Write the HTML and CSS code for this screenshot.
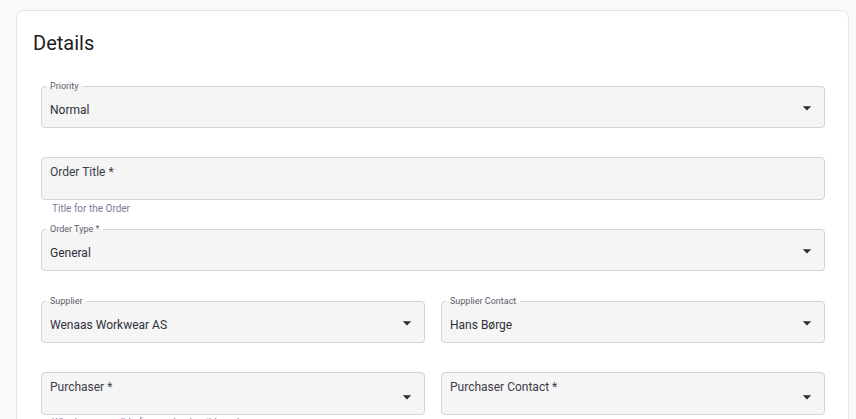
FILE: index.html
```html
<!DOCTYPE html>
<html>
<head>
    <title>Order Details</title>
    <meta name="viewport" content="width=device-width, initial-scale=1.0">
    <link rel="stylesheet" href="styles.css">
</head>
<body>
    <div class="card">
        <h2 class="card-title">Details</h2>

        <div class="form">
            <fieldset class="field field-priority">
                <legend>Priority</legend>
                <div class="value">Normal</div>
                <svg class="arrow" viewBox="0 0 24 24"><path d="M7 10l5 5 5-5z"/></svg>
            </fieldset>

            <div class="field-empty field-title">
                <div class="placeholder">Order Title *</div>
            </div>
            <div class="helper">Title for the Order</div>

            <fieldset class="field field-type">
                <legend>Order Type *</legend>
                <div class="value">General</div>
                <svg class="arrow" viewBox="0 0 24 24"><path d="M7 10l5 5 5-5z"/></svg>
            </fieldset>

            <div class="row row-supplier">
                <fieldset class="field">
                    <legend>Supplier</legend>
                    <div class="value">Wenaas Workwear AS</div>
                    <svg class="arrow" viewBox="0 0 24 24"><path d="M7 10l5 5 5-5z"/></svg>
                </fieldset>
                <fieldset class="field">
                    <legend>Supplier Contact</legend>
                    <div class="value">Hans Børge</div>
                    <svg class="arrow" viewBox="0 0 24 24"><path d="M7 10l5 5 5-5z"/></svg>
                </fieldset>
            </div>

            <div class="row row-purchaser">
                <div>
                    <div class="field-empty select-empty">
                        <div class="placeholder">Purchaser *</div>
                        <svg class="arrow" viewBox="0 0 24 24"><path d="M7 10l5 5 5-5z"/></svg>
                    </div>
                    <div class="helper">Who is responsible for purchasing this order</div>
                </div>
                <div>
                    <div class="field-empty select-empty">
                        <div class="placeholder">Purchaser Contact *</div>
                        <svg class="arrow" viewBox="0 0 24 24"><path d="M7 10l5 5 5-5z"/></svg>
                    </div>
                </div>
            </div>
        </div>
    </div>
</body>
</html>
```

FILE: styles.css
```css
* {
    box-sizing: border-box;
}

body {
    margin: 0;
    background: #f9f9fa;
    font-family: Roboto, "Liberation Sans", sans-serif;
    color: #30303a;
    overflow: hidden;
}

.card {
    margin: 10px 7px 0 16px;
    padding: 20px 16px 40px;
    background: #fff;
    border: 1px solid #e6e6ea;
    border-radius: 8px;
}

.card-title {
    margin: 0;
    font-size: 20px;
    line-height: 24px;
    font-weight: 400;
    color: #1c1c24;
}

.form {
    padding: 0 7px 0 8px;
}

/* outlined fields with a notched label */
.field {
    display: flex;
    align-items: center;
    margin: 0;
    padding: 0 7px 0 8px;
    border: 1px solid #d3d3da;
    border-radius: 4px;
    background: #f5f5f6;
    min-width: 0;
}

.field legend {
    font-size: 9px;
    line-height: 10px;
    padding: 0 4px;
    margin-left: -4px;
    color: #60606c;
}

.field .value {
    flex: 1;
    height: 36px;
    padding-top: 2px;
    display: flex;
    align-items: center;
    font-size: 12px;
}

.arrow {
    width: 20px;
    height: 20px;
    fill: #2a2b38;
    margin-top: -2px;
    flex-shrink: 0;
}

/* fields without a value: label sits inside */
.field-empty {
    height: 43px;
    padding: 7px 7px 0 8px;
    border: 1px solid #d3d3da;
    border-radius: 4px;
    background: #f5f5f6;
}

.placeholder {
    font-size: 12px;
    line-height: 14px;
    color: #3c3c48;
}

.select-empty {
    display: flex;
    justify-content: space-between;
    align-items: flex-start;
}

.select-empty .arrow {
    margin-top: 7px;
}

.helper {
    margin: 3px 0 0 11px;
    font-size: 10px;
    line-height: 12px;
    color: #7a7e98;
}

.field-priority {
    margin-top: 26px;
}

.field-title {
    margin-top: 29px;
}

.field-type {
    margin-top: 9px;
}

.row {
    display: grid;
    grid-template-columns: 1fr 1fr;
    gap: 16px;
}

.row-supplier {
    margin-top: 25px;
}

.row-purchaser {
    margin-top: 29px;
}

.row-purchaser .helper {
    margin-top: 2px;
}
```
